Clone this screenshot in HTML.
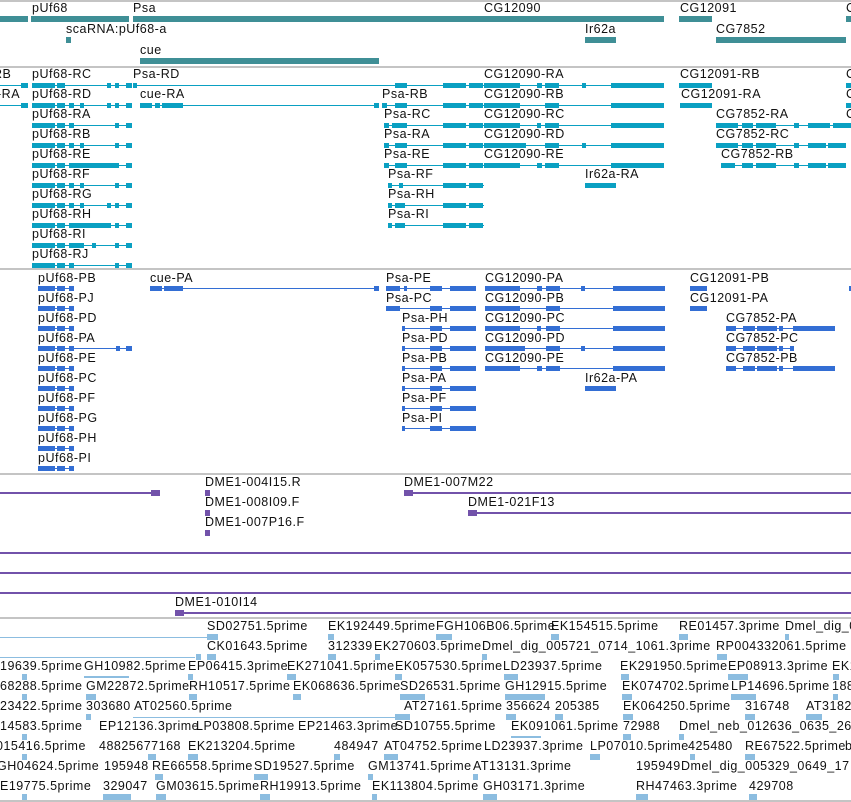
<!DOCTYPE html>
<html><head><meta charset="utf-8">
<style>
*{margin:0;padding:0;box-sizing:border-box}
body{width:851px;height:802px;background:#fff;position:relative;overflow:hidden;font-family:"Liberation Sans","DejaVu Sans",sans-serif;font-size:12.5px;color:#111;letter-spacing:0.5px}
div{position:absolute}
.l{line-height:14px;white-space:nowrap}
.g{height:2px;left:0;width:851px;background:#c4c4c4}
.b{height:6px}
.tg{background:#3f8f96}
.tt{background:#0aa0c2}
.tp{background:#336ed4}
.pu{background:#7252aa}
.es{background:#8cbde0}
.t{height:7px}
.t>div{top:1px;height:5px}
.c2{background:linear-gradient(#0aa0c2,#0aa0c2) 0 3px/100% 1px no-repeat}
.c2>div{background:#0aa0c2}
.c3{background:linear-gradient(#336ed4,#336ed4) 0 3px/100% 1px no-repeat}
.c3>div{background:#336ed4}
.pl{height:2px;background:#7252aa}
.el{height:1px;background:#8cbde0}
.em{height:6px;width:9px;background:#8cbde0}
</style></head><body>

<div class="g" style="top:0"></div>
<div class="g" style="top:66px"></div>
<div class="g" style="top:268px"></div>
<div class="g" style="top:473px"></div>
<div class="g" style="top:617px"></div>
<div class="g" style="top:800px"></div>

<div class="l" style="top:1px;left:32px">pUf68</div>
<div class="l" style="top:1px;left:133px">Psa</div>
<div class="l" style="top:1px;left:484px">CG12090</div>
<div class="l" style="top:1px;left:680px">CG12091</div>
<div class="l" style="top:1px;left:846px">C</div>
<div class="b tg" style="top:16px;left:0;width:28px"></div>
<div class="b tg" style="top:16px;left:31px;width:98px"></div>
<div class="b tg" style="top:16px;left:133px;width:531px"></div>
<div class="b tg" style="top:16px;left:679px;width:33px"></div>
<div class="b tg" style="top:16px;left:846px;width:5px"></div>
<div class="l" style="top:22px;left:66px">scaRNA:pUf68-a</div>
<div class="b tg" style="top:37px;left:66px;width:5px"></div>
<div class="l" style="top:22px;left:585px">Ir62a</div>
<div class="b tg" style="top:37px;left:585px;width:31px"></div>
<div class="l" style="top:22px;left:716px">CG7852</div>
<div class="b tg" style="top:37px;left:716px;width:130px"></div>
<div class="l" style="top:43px;left:140px">cue</div>
<div class="b tg" style="top:58px;left:140px;width:239px"></div>

<div class="l" style="top:67px;left:-7px">RB</div>
<div class="l" style="top:87px;left:-3px">-RA</div>
<div class="t c2" style="top:82px;left:0;width:28px"><div style="left:21px;width:7px"></div></div>
<div class="t c2" style="top:102px;left:0;width:28px"><div style="left:21px;width:7px"></div></div>

<div class="l" style="top:67px;left:32px">pUf68-RC</div>
<div class="l" style="top:87px;left:32px">pUf68-RD</div>
<div class="l" style="top:107px;left:32px">pUf68-RA</div>
<div class="l" style="top:127px;left:32px">pUf68-RB</div>
<div class="l" style="top:147px;left:32px">pUf68-RE</div>
<div class="l" style="top:167px;left:32px">pUf68-RF</div>
<div class="l" style="top:187px;left:32px">pUf68-RG</div>
<div class="l" style="top:207px;left:32px">pUf68-RH</div>
<div class="l" style="top:227px;left:32px">pUf68-RI</div>
<div class="l" style="top:247px;left:32px">pUf68-RJ</div>
<div class="t c2" style="top:82px;left:32px;width:100px"><div style="left:0;width:23px"></div><div style="left:25px;width:8px"></div><div style="left:75px;width:4px"></div><div style="left:83px;width:4px"></div><div style="left:94px;width:6px"></div></div>
<div class="t c2" style="top:102px;left:32px;width:100px"><div style="left:0;width:23px"></div><div style="left:25px;width:8px"></div><div style="left:37px;width:5px"></div><div style="left:48px;width:4px"></div><div style="left:75px;width:4px"></div><div style="left:83px;width:4px"></div><div style="left:94px;width:6px"></div></div>
<div class="t c2" style="top:122px;left:32px;width:100px"><div style="left:0;width:23px"></div><div style="left:25px;width:8px"></div><div style="left:37px;width:5px"></div><div style="left:83px;width:4px"></div><div style="left:94px;width:6px"></div></div>
<div class="t c2" style="top:142px;left:32px;width:100px"><div style="left:0;width:23px"></div><div style="left:25px;width:8px"></div><div style="left:37px;width:5px"></div><div style="left:48px;width:4px"></div><div style="left:83px;width:4px"></div><div style="left:94px;width:6px"></div></div>
<div class="t c2" style="top:162px;left:32px;width:100px"><div style="left:0;width:23px"></div><div style="left:25px;width:8px"></div><div style="left:37px;width:50px"></div><div style="left:94px;width:6px"></div></div>
<div class="t c2" style="top:182px;left:32px;width:100px"><div style="left:0;width:23px"></div><div style="left:25px;width:8px"></div><div style="left:37px;width:5px"></div><div style="left:48px;width:4px"></div><div style="left:83px;width:4px"></div><div style="left:94px;width:6px"></div></div>
<div class="t c2" style="top:202px;left:32px;width:100px"><div style="left:0;width:23px"></div><div style="left:25px;width:8px"></div><div style="left:37px;width:5px"></div><div style="left:48px;width:4px"></div><div style="left:75px;width:4px"></div><div style="left:83px;width:4px"></div><div style="left:94px;width:6px"></div></div>
<div class="t c2" style="top:222px;left:32px;width:100px"><div style="left:0;width:23px"></div><div style="left:25px;width:8px"></div><div style="left:37px;width:42px"></div><div style="left:83px;width:4px"></div><div style="left:94px;width:6px"></div></div>
<div class="t c2" style="top:242px;left:32px;width:100px"><div style="left:0;width:23px"></div><div style="left:25px;width:8px"></div><div style="left:37px;width:15px"></div><div style="left:60px;width:4px"></div><div style="left:83px;width:4px"></div><div style="left:94px;width:6px"></div></div>
<div class="t c2" style="top:262px;left:32px;width:100px"><div style="left:0;width:23px"></div><div style="left:25px;width:8px"></div><div style="left:37px;width:5px"></div><div style="left:83px;width:4px"></div><div style="left:94px;width:6px"></div></div>

<div class="l" style="top:67px;left:133px">Psa-RD</div>
<div class="t c2" style="top:82px;left:133px;width:351px"><div style="left:0;width:4px"></div><div style="left:262px;width:12px"></div><div style="left:310px;width:23px"></div><div style="left:336px;width:14px"></div></div>
<div class="l" style="top:87px;left:140px">cue-RA</div>
<div class="t c2" style="top:102px;left:140px;width:239px"><div style="left:0;width:12px"></div><div style="left:15px;width:5px"></div><div style="left:22px;width:21px"></div><div style="left:234px;width:5px"></div></div>
<div class="l" style="top:87px;left:382px">Psa-RB</div>
<div class="l" style="top:107px;left:384px">Psa-RC</div>
<div class="l" style="top:127px;left:384px">Psa-RA</div>
<div class="l" style="top:147px;left:384px">Psa-RE</div>
<div class="l" style="top:167px;left:388px">Psa-RF</div>
<div class="l" style="top:187px;left:388px">Psa-RH</div>
<div class="l" style="top:207px;left:388px">Psa-RI</div>
<div class="t c2" style="top:102px;left:382px;width:102px"><div style="left:0;width:5px"></div><div style="left:13px;width:12px"></div><div style="left:61px;width:23px"></div><div style="left:87px;width:14px"></div></div>
<div class="t c2" style="top:122px;left:384px;width:100px"><div style="left:0;width:5px"></div><div style="left:8px;width:15px"></div><div style="left:59px;width:23px"></div><div style="left:85px;width:14px"></div></div>
<div class="t c2" style="top:142px;left:384px;width:100px"><div style="left:0;width:5px"></div><div style="left:11px;width:12px"></div><div style="left:59px;width:23px"></div><div style="left:85px;width:14px"></div></div>
<div class="t c2" style="top:162px;left:384px;width:100px"><div style="left:0;width:5px"></div><div style="left:11px;width:12px"></div><div style="left:59px;width:23px"></div><div style="left:85px;width:14px"></div></div>
<div class="t c2" style="top:182px;left:388px;width:96px"><div style="left:0;width:4px"></div><div style="left:11px;width:4px"></div><div style="left:55px;width:23px"></div><div style="left:81px;width:14px"></div></div>
<div class="t c2" style="top:202px;left:388px;width:96px"><div style="left:0;width:4px"></div><div style="left:7px;width:10px"></div><div style="left:55px;width:23px"></div><div style="left:81px;width:14px"></div></div>
<div class="t c2" style="top:222px;left:388px;width:96px"><div style="left:0;width:4px"></div><div style="left:7px;width:10px"></div><div style="left:55px;width:23px"></div><div style="left:81px;width:14px"></div></div>

<div class="l" style="top:67px;left:484px">CG12090-RA</div>
<div class="l" style="top:87px;left:484px">CG12090-RB</div>
<div class="l" style="top:107px;left:484px">CG12090-RC</div>
<div class="l" style="top:127px;left:484px">CG12090-RD</div>
<div class="l" style="top:147px;left:484px">CG12090-RE</div>
<div class="t c2" style="top:82px;left:484px;width:180px"><div style="left:0;width:36px"></div><div style="left:53px;width:5px"></div><div style="left:61px;width:14px"></div><div style="left:98px;width:4px"></div><div style="left:127px;width:53px"></div></div>
<div class="t c2" style="top:102px;left:484px;width:180px"><div style="left:0;width:36px"></div><div style="left:61px;width:14px"></div><div style="left:127px;width:53px"></div></div>
<div class="t c2" style="top:122px;left:484px;width:180px"><div style="left:0;width:36px"></div><div style="left:53px;width:4px"></div><div style="left:61px;width:14px"></div><div style="left:127px;width:53px"></div></div>
<div class="t c2" style="top:142px;left:484px;width:180px"><div style="left:0;width:42px"></div><div style="left:61px;width:14px"></div><div style="left:98px;width:4px"></div><div style="left:127px;width:53px"></div></div>
<div class="t c2" style="top:162px;left:484px;width:180px"><div style="left:0;width:36px"></div><div style="left:53px;width:5px"></div><div style="left:61px;width:14px"></div><div style="left:127px;width:53px"></div></div>
<div class="l" style="top:167px;left:585px">Ir62a-RA</div>
<div class="b tt" style="top:183px;left:585px;width:31px;height:5px"></div>

<div class="l" style="top:67px;left:680px">CG12091-RB</div>
<div class="b tt" style="top:83px;left:679px;width:33px;height:5px"></div>
<div class="l" style="top:87px;left:681px">CG12091-RA</div>
<div class="b tt" style="top:103px;left:680px;width:32px;height:5px"></div>
<div class="l" style="top:107px;left:716px">CG7852-RA</div>
<div class="l" style="top:127px;left:716px">CG7852-RC</div>
<div class="l" style="top:147px;left:721px">CG7852-RB</div>
<div class="t c2" style="top:122px;left:716px;width:135px"><div style="left:0;width:22px"></div><div style="left:26px;width:11px"></div><div style="left:40px;width:20px"></div><div style="left:78px;width:5px"></div><div style="left:92px;width:22px"></div><div style="left:117px;width:18px"></div></div>
<div class="t c2" style="top:142px;left:716px;width:130px"><div style="left:0;width:22px"></div><div style="left:26px;width:11px"></div><div style="left:40px;width:20px"></div><div style="left:78px;width:5px"></div><div style="left:92px;width:18px"></div><div style="left:112px;width:18px"></div></div>
<div class="t c2" style="top:162px;left:721px;width:125px"><div style="left:0;width:14px"></div><div style="left:21px;width:11px"></div><div style="left:35px;width:20px"></div><div style="left:73px;width:5px"></div><div style="left:87px;width:18px"></div><div style="left:107px;width:18px"></div></div>
<div class="l" style="top:67px;left:846px">C</div>
<div class="l" style="top:87px;left:846px">C</div>
<div class="l" style="top:107px;left:846px">C</div>
<div class="b tt" style="top:83px;left:846px;width:5px;height:5px"></div>
<div class="b tt" style="top:103px;left:846px;width:5px;height:5px"></div>

<div class="l" style="top:271px;left:38px">pUf68-PB</div>
<div class="l" style="top:291px;left:38px">pUf68-PJ</div>
<div class="l" style="top:311px;left:38px">pUf68-PD</div>
<div class="l" style="top:331px;left:38px">pUf68-PA</div>
<div class="l" style="top:351px;left:38px">pUf68-PE</div>
<div class="l" style="top:371px;left:38px">pUf68-PC</div>
<div class="l" style="top:391px;left:38px">pUf68-PF</div>
<div class="l" style="top:411px;left:38px">pUf68-PG</div>
<div class="l" style="top:431px;left:38px">pUf68-PH</div>
<div class="l" style="top:451px;left:38px">pUf68-PI</div>
<div class="t c3" style="top:285px;left:38px;width:36px"><div style="left:0;width:17px"></div><div style="left:19px;width:8px"></div><div style="left:31px;width:5px"></div></div>
<div class="t c3" style="top:305px;left:38px;width:36px"><div style="left:0;width:17px"></div><div style="left:19px;width:8px"></div><div style="left:31px;width:5px"></div></div>
<div class="t c3" style="top:325px;left:38px;width:36px"><div style="left:0;width:17px"></div><div style="left:19px;width:8px"></div><div style="left:31px;width:5px"></div></div>
<div class="t c3" style="top:345px;left:38px;width:94px"><div style="left:0;width:17px"></div><div style="left:19px;width:8px"></div><div style="left:31px;width:5px"></div><div style="left:78px;width:4px"></div><div style="left:88px;width:6px"></div></div>
<div class="t c3" style="top:365px;left:38px;width:36px"><div style="left:0;width:17px"></div><div style="left:19px;width:8px"></div><div style="left:31px;width:5px"></div></div>
<div class="t c3" style="top:385px;left:38px;width:36px"><div style="left:0;width:17px"></div><div style="left:19px;width:8px"></div><div style="left:31px;width:5px"></div></div>
<div class="t c3" style="top:405px;left:38px;width:36px"><div style="left:0;width:17px"></div><div style="left:19px;width:8px"></div><div style="left:31px;width:5px"></div></div>
<div class="t c3" style="top:425px;left:38px;width:36px"><div style="left:0;width:17px"></div><div style="left:19px;width:8px"></div><div style="left:31px;width:5px"></div></div>
<div class="t c3" style="top:445px;left:38px;width:36px"><div style="left:0;width:17px"></div><div style="left:19px;width:8px"></div><div style="left:31px;width:5px"></div></div>
<div class="t c3" style="top:465px;left:38px;width:36px"><div style="left:0;width:17px"></div><div style="left:19px;width:8px"></div><div style="left:31px;width:5px"></div></div>

<div class="l" style="top:271px;left:150px">cue-PA</div>
<div class="t c3" style="top:285px;left:150px;width:229px"><div style="left:0;width:12px"></div><div style="left:14px;width:19px"></div><div style="left:224px;width:5px"></div></div>

<div class="l" style="top:271px;left:386px">Psa-PE</div>
<div class="l" style="top:291px;left:386px">Psa-PC</div>
<div class="l" style="top:311px;left:402px">Psa-PH</div>
<div class="l" style="top:331px;left:402px">Psa-PD</div>
<div class="l" style="top:351px;left:402px">Psa-PB</div>
<div class="l" style="top:371px;left:402px">Psa-PA</div>
<div class="l" style="top:391px;left:402px">Psa-PF</div>
<div class="l" style="top:411px;left:402px">Psa-PI</div>
<div class="t c3" style="top:285px;left:386px;width:90px"><div style="left:0;width:14px"></div><div style="left:18px;width:3px"></div><div style="left:44px;width:12px"></div><div style="left:64px;width:26px"></div></div>
<div class="t c3" style="top:305px;left:386px;width:90px"><div style="left:0;width:14px"></div><div style="left:44px;width:12px"></div><div style="left:64px;width:26px"></div></div>
<div class="t c3" style="top:325px;left:402px;width:74px"><div style="left:0;width:3px"></div><div style="left:28px;width:12px"></div><div style="left:48px;width:26px"></div></div>
<div class="t c3" style="top:345px;left:402px;width:74px"><div style="left:0;width:3px"></div><div style="left:28px;width:12px"></div><div style="left:48px;width:26px"></div></div>
<div class="t c3" style="top:365px;left:402px;width:74px"><div style="left:0;width:3px"></div><div style="left:28px;width:12px"></div><div style="left:48px;width:26px"></div></div>
<div class="t c3" style="top:385px;left:402px;width:74px"><div style="left:0;width:3px"></div><div style="left:28px;width:12px"></div><div style="left:48px;width:26px"></div></div>
<div class="t c3" style="top:405px;left:402px;width:74px"><div style="left:0;width:3px"></div><div style="left:28px;width:12px"></div><div style="left:48px;width:26px"></div></div>
<div class="t c3" style="top:425px;left:402px;width:74px"><div style="left:0;width:3px"></div><div style="left:28px;width:12px"></div><div style="left:48px;width:26px"></div></div>

<div class="l" style="top:271px;left:485px">CG12090-PA</div>
<div class="l" style="top:291px;left:485px">CG12090-PB</div>
<div class="l" style="top:311px;left:485px">CG12090-PC</div>
<div class="l" style="top:331px;left:485px">CG12090-PD</div>
<div class="l" style="top:351px;left:485px">CG12090-PE</div>
<div class="t c3" style="top:285px;left:485px;width:180px"><div style="left:0;width:35px"></div><div style="left:52px;width:5px"></div><div style="left:61px;width:14px"></div><div style="left:96px;width:4px"></div><div style="left:128px;width:52px"></div></div>
<div class="t c3" style="top:305px;left:485px;width:180px"><div style="left:0;width:35px"></div><div style="left:61px;width:14px"></div><div style="left:128px;width:52px"></div></div>
<div class="t c3" style="top:325px;left:485px;width:180px"><div style="left:0;width:35px"></div><div style="left:52px;width:4px"></div><div style="left:61px;width:14px"></div><div style="left:128px;width:52px"></div></div>
<div class="t c3" style="top:345px;left:485px;width:180px"><div style="left:0;width:40px"></div><div style="left:61px;width:14px"></div><div style="left:96px;width:4px"></div><div style="left:128px;width:52px"></div></div>
<div class="t c3" style="top:365px;left:485px;width:180px"><div style="left:0;width:35px"></div><div style="left:52px;width:5px"></div><div style="left:61px;width:14px"></div><div style="left:128px;width:52px"></div></div>
<div class="l" style="top:371px;left:585px">Ir62a-PA</div>
<div class="b tp" style="top:386px;left:585px;width:31px;height:5px"></div>

<div class="l" style="top:271px;left:690px">CG12091-PB</div>
<div class="b tp" style="top:286px;left:690px;width:17px;height:5px"></div>
<div class="l" style="top:291px;left:690px">CG12091-PA</div>
<div class="b tp" style="top:306px;left:690px;width:17px;height:5px"></div>
<div class="l" style="top:311px;left:726px">CG7852-PA</div>
<div class="l" style="top:331px;left:726px">CG7852-PC</div>
<div class="l" style="top:351px;left:726px">CG7852-PB</div>
<div class="t c3" style="top:325px;left:726px;width:109px"><div style="left:0;width:10px"></div><div style="left:17px;width:12px"></div><div style="left:31px;width:20px"></div><div style="left:53px;width:4px"></div><div style="left:67px;width:42px"></div></div>
<div class="t c3" style="top:345px;left:726px;width:68px"><div style="left:0;width:10px"></div><div style="left:17px;width:12px"></div><div style="left:31px;width:20px"></div><div style="left:53px;width:4px"></div><div style="left:64px;width:4px"></div></div>
<div class="t c3" style="top:365px;left:726px;width:109px"><div style="left:0;width:10px"></div><div style="left:17px;width:12px"></div><div style="left:31px;width:20px"></div><div style="left:53px;width:4px"></div><div style="left:67px;width:42px"></div></div>
<div class="b tp" style="top:286px;left:849px;width:2px;height:5px"></div>

<div class="pl" style="top:492px;left:0;width:154px"></div>
<div class="b pu" style="top:490px;left:151px;width:9px"></div>
<div class="l" style="top:475px;left:205px">DME1-004I15.R</div>
<div class="b pu" style="top:490px;left:205px;width:5px"></div>
<div class="l" style="top:495px;left:205px">DME1-008I09.F</div>
<div class="b pu" style="top:510px;left:205px;width:5px"></div>
<div class="l" style="top:515px;left:205px">DME1-007P16.F</div>
<div class="b pu" style="top:530px;left:205px;width:5px"></div>
<div class="l" style="top:475px;left:404px">DME1-007M22</div>
<div class="pl" style="top:492px;left:404px;width:447px"></div>
<div class="b pu" style="top:490px;left:404px;width:9px"></div>
<div class="l" style="top:495px;left:468px">DME1-021F13</div>
<div class="pl" style="top:512px;left:468px;width:383px"></div>
<div class="b pu" style="top:510px;left:468px;width:9px"></div>
<div class="pl" style="top:552px;left:0;width:851px"></div>
<div class="pl" style="top:572px;left:0;width:851px"></div>
<div class="pl" style="top:592px;left:0;width:851px"></div>
<div class="l" style="top:595px;left:175px">DME1-010I14</div>
<div class="pl" style="top:612px;left:175px;width:676px"></div>
<div class="b pu" style="top:610px;left:175px;width:9px"></div>

<div class="el" style="top:637px;left:0;width:210px"></div>
<div class="el" style="top:657px;left:0;width:195px"></div>
<div class="el" style="top:717px;left:133px;width:270px"></div>
<div class="l" style="top:619px;left:207px">SD02751.5prime</div>
<div class="l" style="top:619px;left:328px">EK192449.5prime</div>
<div class="l" style="top:619px;left:436px">FGH106B06.5prime</div>
<div class="l" style="top:619px;left:551px">EK154515.5prime</div>
<div class="l" style="top:619px;left:679px">RE01457.3prime</div>
<div class="l" style="top:619px;left:785px">Dmel_dig_0</div>
<div class="l" style="top:639px;left:207px">CK01643.5prime</div>
<div class="l" style="top:639px;left:328px">312339</div>
<div class="l" style="top:639px;left:374px">EK270603.5prime</div>
<div class="l" style="top:639px;left:482px">Dmel_dig_005721_0714_1061.3prime</div>
<div class="l" style="top:639px;left:716px">RP004332061.5prime</div>
<div class="l" style="top:659px;left:0">19639.5prime</div>
<div class="l" style="top:659px;left:84px">GH10982.5prime</div>
<div class="l" style="top:659px;left:188px">EP06415.3prime</div>
<div class="l" style="top:659px;left:287px">EK271041.5prime</div>
<div class="l" style="top:659px;left:395px">EK057530.5prime</div>
<div class="l" style="top:659px;left:503px">LD23937.5prime</div>
<div class="l" style="top:659px;left:620px">EK291950.5prime</div>
<div class="l" style="top:659px;left:728px">EP08913.3prime</div>
<div class="l" style="top:659px;left:832px">EK1</div>
<div class="l" style="top:679px;left:0">68288.5prime</div>
<div class="l" style="top:679px;left:86px">GM22872.5prime</div>
<div class="l" style="top:679px;left:189px">RH10517.5prime</div>
<div class="l" style="top:679px;left:293px">EK068636.5prime</div>
<div class="l" style="top:679px;left:400px">SD26531.5prime</div>
<div class="l" style="top:679px;left:505px">GH12915.5prime</div>
<div class="l" style="top:679px;left:622px">EK074702.5prime</div>
<div class="l" style="top:679px;left:731px">LP14696.5prime</div>
<div class="l" style="top:679px;left:832px">188</div>
<div class="l" style="top:699px;left:0">23422.5prime</div>
<div class="l" style="top:699px;left:86px">303680</div>
<div class="l" style="top:699px;left:134px">AT02560.5prime</div>
<div class="l" style="top:699px;left:404px">AT27161.5prime</div>
<div class="l" style="top:699px;left:506px">356624</div>
<div class="l" style="top:699px;left:555px">205385</div>
<div class="l" style="top:699px;left:623px">EK064250.5prime</div>
<div class="l" style="top:699px;left:745px">316748</div>
<div class="l" style="top:699px;left:806px">AT3182</div>
<div class="l" style="top:719px;left:0">14583.5prime</div>
<div class="l" style="top:719px;left:99px">EP12136.3prime</div>
<div class="l" style="top:719px;left:196px">LP03808.5prime</div>
<div class="l" style="top:719px;left:298px">EP21463.3prime</div>
<div class="l" style="top:719px;left:395px">SD10755.5prime</div>
<div class="l" style="top:719px;left:511px">EK091061.5prime</div>
<div class="l" style="top:719px;left:623px">72988</div>
<div class="l" style="top:719px;left:679px">Dmel_neb_012636_0635_26</div>
<div class="l" style="top:739px;left:-4px">015416.5prime</div>
<div class="l" style="top:739px;left:99px">48825677168</div>
<div class="l" style="top:739px;left:188px">EK213204.5prime</div>
<div class="l" style="top:739px;left:334px">484947</div>
<div class="l" style="top:739px;left:384px">AT04752.5prime</div>
<div class="l" style="top:739px;left:484px">LD23937.3prime</div>
<div class="l" style="top:739px;left:590px">LP07010.5prime</div>
<div class="l" style="top:739px;left:688px">425480</div>
<div class="l" style="top:739px;left:745px">RE67522.5prime</div>
<div class="l" style="top:739px;left:845px">b</div>
<div class="l" style="top:759px;left:-3px">GH04624.5prime</div>
<div class="l" style="top:759px;left:104px">195948</div>
<div class="l" style="top:759px;left:152px">RE66558.5prime</div>
<div class="l" style="top:759px;left:254px">SD19527.5prime</div>
<div class="l" style="top:759px;left:368px">GM13741.5prime</div>
<div class="l" style="top:759px;left:473px">AT13131.3prime</div>
<div class="l" style="top:759px;left:636px">195949</div>
<div class="l" style="top:759px;left:681px">Dmel_dig_005329_0649_17</div>
<div class="l" style="top:779px;left:0">E19775.5prime</div>
<div class="l" style="top:779px;left:103px">329047</div>
<div class="l" style="top:779px;left:156px">GM03615.5prime</div>
<div class="l" style="top:779px;left:260px">RH19913.5prime</div>
<div class="l" style="top:779px;left:372px">EK113804.5prime</div>
<div class="l" style="top:779px;left:483px">GH03171.3prime</div>
<div class="l" style="top:779px;left:636px">RH47463.3prime</div>
<div class="l" style="top:779px;left:749px">429708</div>
<div class="em" style="top:634px;left:207px;width:11px"></div>
<div class="em" style="top:634px;left:328px;width:6px"></div>
<div class="em" style="top:634px;left:436px;width:16px"></div>
<div class="em" style="top:634px;left:551px;width:8px"></div>
<div class="em" style="top:634px;left:679px"></div>
<div class="em" style="top:634px;left:785px;width:4px"></div>
<div class="em" style="top:654px;left:196px;width:5px"></div>
<div class="em" style="top:654px;left:207px;width:9px"></div>
<div class="em" style="top:654px;left:328px;width:8px"></div>
<div class="em" style="top:654px;left:375px;width:5px"></div>
<div class="em" style="top:654px;left:482px;width:5px"></div>
<div class="em" style="top:654px;left:717px;width:10px"></div>
<div class="em" style="top:674px;left:22px;width:5px"></div>
<div class="em" style="top:676px;left:84px;width:45px;height:2px"></div>
<div class="em" style="top:674px;left:188px;width:5px"></div>
<div class="em" style="top:674px;left:287px;width:9px"></div>
<div class="em" style="top:674px;left:395px;width:7px"></div>
<div class="em" style="top:674px;left:504px;width:14px"></div>
<div class="em" style="top:674px;left:621px;width:8px"></div>
<div class="em" style="top:674px;left:728px;width:20px"></div>
<div class="em" style="top:674px;left:833px;width:6px"></div>
<div class="em" style="top:694px;left:22px;width:5px"></div>
<div class="em" style="top:694px;left:86px;width:10px"></div>
<div class="em" style="top:694px;left:189px;width:8px"></div>
<div class="em" style="top:694px;left:293px;width:8px"></div>
<div class="em" style="top:694px;left:400px;width:25px"></div>
<div class="em" style="top:694px;left:505px;width:40px"></div>
<div class="em" style="top:694px;left:622px;width:10px"></div>
<div class="em" style="top:694px;left:731px;width:25px"></div>
<div class="em" style="top:694px;left:833px;width:5px"></div>
<div class="em" style="top:714px;left:86px;width:5px"></div>
<div class="em" style="top:714px;left:395px;width:15px"></div>
<div class="em" style="top:714px;left:506px;width:10px"></div>
<div class="em" style="top:714px;left:555px;width:8px"></div>
<div class="em" style="top:714px;left:623px;width:10px"></div>
<div class="em" style="top:714px;left:745px;width:10px"></div>
<div class="em" style="top:714px;left:806px;width:16px"></div>
<div class="em" style="top:734px;left:22px;width:5px"></div>
<div class="em" style="top:736px;left:511px;width:30px;height:2px"></div>
<div class="em" style="top:734px;left:623px;width:8px"></div>
<div class="em" style="top:734px;left:679px;width:5px"></div>
<div class="em" style="top:754px;left:22px;width:5px"></div>
<div class="em" style="top:754px;left:148px;width:8px"></div>
<div class="em" style="top:754px;left:188px;width:10px"></div>
<div class="em" style="top:754px;left:334px;width:6px"></div>
<div class="em" style="top:754px;left:384px;width:14px"></div>
<div class="em" style="top:754px;left:590px;width:10px"></div>
<div class="em" style="top:754px;left:690px;width:5px"></div>
<div class="em" style="top:754px;left:745px;width:10px"></div>
<div class="em" style="top:774px;left:254px;width:14px"></div>
<div class="em" style="top:774px;left:155px;width:8px"></div>
<div class="em" style="top:774px;left:368px;width:5px"></div>
<div class="em" style="top:774px;left:473px;width:5px"></div>
<div class="em" style="top:794px;left:22px;width:5px"></div>
<div class="em" style="top:794px;left:103px;width:28px"></div>
<div class="em" style="top:794px;left:156px;width:10px"></div>
<div class="em" style="top:794px;left:260px;width:10px"></div>
<div class="em" style="top:794px;left:372px;width:5px"></div>
<div class="em" style="top:794px;left:483px;width:14px"></div>
<div class="em" style="top:794px;left:636px;width:12px"></div>
<div class="em" style="top:794px;left:749px;width:8px"></div>
</body></html>
